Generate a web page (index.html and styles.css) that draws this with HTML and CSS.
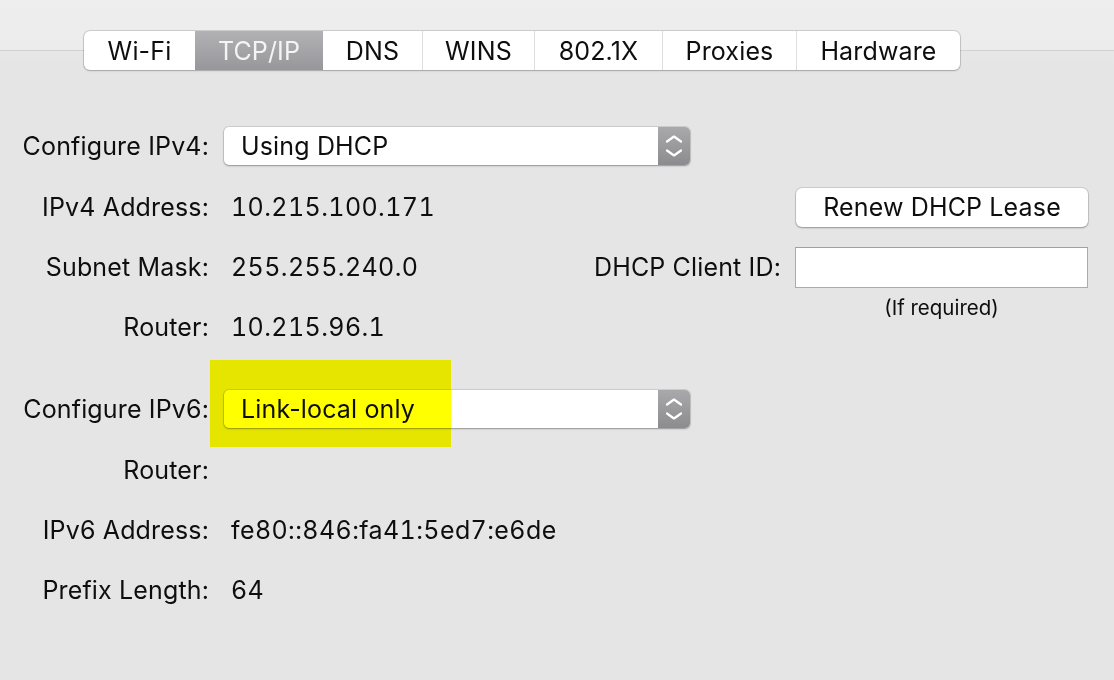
FILE: index.html
```html
<!DOCTYPE html>
<html>
<head>
<meta charset="utf-8">
<link rel="stylesheet" href="styles.css">
</head>
<body>
<header class="toolbar">
  <nav class="tabs">
    <div class="tab t-wifi">Wi-Fi</div>
    <div class="tab t-tcp selected">TCP/IP</div>
    <div class="tab t-dns">DNS</div>
    <div class="tab t-wins">WINS</div>
    <div class="tab t-8021x">802.1X</div>
    <div class="tab t-proxies">Proxies</div>
    <div class="tab t-hw">Hardware</div>
  </nav>
</header>

<main class="pane">
  <section class="section ipv4">
    <div class="row r1">
      <div class="label">Configure IPv4:</div>
      <div class="popup">
        <span class="popup-text">Using DHCP</span>
        <span class="stepper">
          <svg width="32" height="38" viewBox="0 0 32 38"><path d="M9 14.5 L16 9.5 L23 14.5" fill="none" stroke="#fff" stroke-width="2.2" stroke-linecap="round" stroke-linejoin="round"/><path d="M9 23.5 L16 28.5 L23 23.5" fill="none" stroke="#fff" stroke-width="2.2" stroke-linecap="round" stroke-linejoin="round"/></svg>
        </span>
      </div>
    </div>
    <div class="row r2">
      <div class="label">IPv4 Address:</div>
      <div class="value">10.215.100.171</div>
      <button class="btn">Renew DHCP Lease</button>
    </div>
    <div class="row r3">
      <div class="label">Subnet Mask:</div>
      <div class="value">255.255.240.0</div>
      <div class="client">
        <span class="client-label">DHCP Client ID:</span>
        <span class="field"></span>
      </div>
    </div>
    <div class="row r4">
      <div class="label">Router:</div>
      <div class="value">10.215.96.1</div>
      <div class="hint">(If required)</div>
    </div>
  </section>

  <section class="section ipv6">
    <div class="row r5">
      <div class="label">Configure IPv6:</div>
      <div class="popup">
        <span class="popup-text">Link-local only</span>
        <span class="stepper">
          <svg width="32" height="38" viewBox="0 0 32 38"><path d="M9 14.5 L16 9.5 L23 14.5" fill="none" stroke="#fff" stroke-width="2.2" stroke-linecap="round" stroke-linejoin="round"/><path d="M9 23.5 L16 28.5 L23 23.5" fill="none" stroke="#fff" stroke-width="2.2" stroke-linecap="round" stroke-linejoin="round"/></svg>
        </span>
      </div>
      <div class="highlight"></div>
    </div>
    <div class="row r6">
      <div class="label">Router:</div>
      <div class="value"></div>
    </div>
    <div class="row r7">
      <div class="label">IPv6 Address:</div>
      <div class="value">fe80::846:fa41:5ed7:e6de</div>
    </div>
    <div class="row r8">
      <div class="label">Prefix Length:</div>
      <div class="value">64</div>
    </div>
  </section>
</main>
</body>
</html>
```

FILE: styles.css
```css
html, body {
  margin: 0;
  padding: 0;
}
body {
  width: 1114px;
  height: 680px;
  overflow: hidden;
  background: #e5e5e5;
  font-family: "Inter", "Roboto", "Liberation Sans", sans-serif;
  font-size: 25px;
  letter-spacing: 0.15px;
  color: #0e0e0e;
}

.toolbar {
  height: 70px;
  padding-top: 31px;
  box-sizing: border-box;
  background: linear-gradient(#eeeeee 0, #ececec 50px, #d2d2d2 50px, #d2d2d2 51px, #e7e7e7 51px, #e5e5e5 70px);
}

.tabs {
  display: flex;
  margin-left: 84px;
  width: 876px;
  height: 39px;
  background: #fff;
  border-radius: 6px;
  box-shadow: 0 0 0 1px rgba(0,0,0,0.13), 0 1px 2px rgba(0,0,0,0.18);
  overflow: hidden;
}
.tab {
  display: flex;
  align-items: center;
  justify-content: center;
  border-left: 1px solid #dedede;
  box-sizing: border-box;
  color: #0e0e0e;
}
.tab:first-child { border-left: none; }
.t-wifi { width: 111px; }
.t-tcp { width: 128px; }
.t-dns { width: 99px; }
.t-wins { width: 112px; }
.t-8021x { width: 128px; }
.t-proxies { width: 134px; }
.t-hw { width: 164px; }
.tab.selected {
  background: linear-gradient(#b2b1b4, #97969a);
  color: #f4f4f4;
  border-left: none;
}
.tab.selected + .tab { border-left: none; }

.pane {
  padding: 44px 26px 0 0;
}

.section {
  display: flex;
  flex-direction: column;
}
.ipv6 { margin-top: 21px; }

.row {
  display: flex;
  align-items: center;
  height: 60px;
  position: relative;
}
.r1 { height: 63px; }
.r5, .r6 { height: 61px; }

.label {
  width: 209px;
  flex: none;
  text-align: right;
  white-space: nowrap;
}
.value {
  margin-left: 22px;
  white-space: nowrap;
  font-feature-settings: "tnum" 1;
  letter-spacing: 0.4px;
}

.popup {
  margin-left: 15px;
  width: 466px;
  height: 38px;
  display: flex;
  align-items: center;
  background: #fff;
  border-radius: 5px;
  box-shadow: 0 0 0 1px rgba(0,0,0,0.1), 0 1px 2px rgba(0,0,0,0.28);
  overflow: hidden;
}
.popup-text {
  flex: 1;
  padding-left: 17px;
}
.stepper {
  width: 32px;
  height: 38px;
  display: block;
  background: linear-gradient(#a9a9ac, #8c8c8f);
}
.stepper svg { display: block; }

.btn {
  margin-left: auto;
  width: 292px;
  height: 39px;
  border: none;
  border-radius: 6px;
  background: #fff;
  box-shadow: 0 0 0 1px rgba(0,0,0,0.1), 0 1px 2px rgba(0,0,0,0.28);
  font: inherit;
  letter-spacing: inherit;
  color: #0e0e0e;
  padding: 0;
}

.client {
  margin-left: auto;
  display: flex;
  align-items: center;
}
.client-label {
  margin-right: 14px;
}
.field {
  display: block;
  width: 293px;
  height: 41px;
  box-sizing: border-box;
  background: #fff;
  border: 1px solid #ababab;
  border-top-color: #a0a0a0;
}

.hint {
  margin-left: auto;
  width: 293px;
  text-align: center;
  align-self: flex-start;
  margin-top: -2px;
  font-size: 20.5px;
  letter-spacing: 0;
}

.highlight {
  position: absolute;
  left: 210px;
  top: -18px;
  width: 241px;
  height: 87px;
  background: #ffff00;
  mix-blend-mode: multiply;
}
```
